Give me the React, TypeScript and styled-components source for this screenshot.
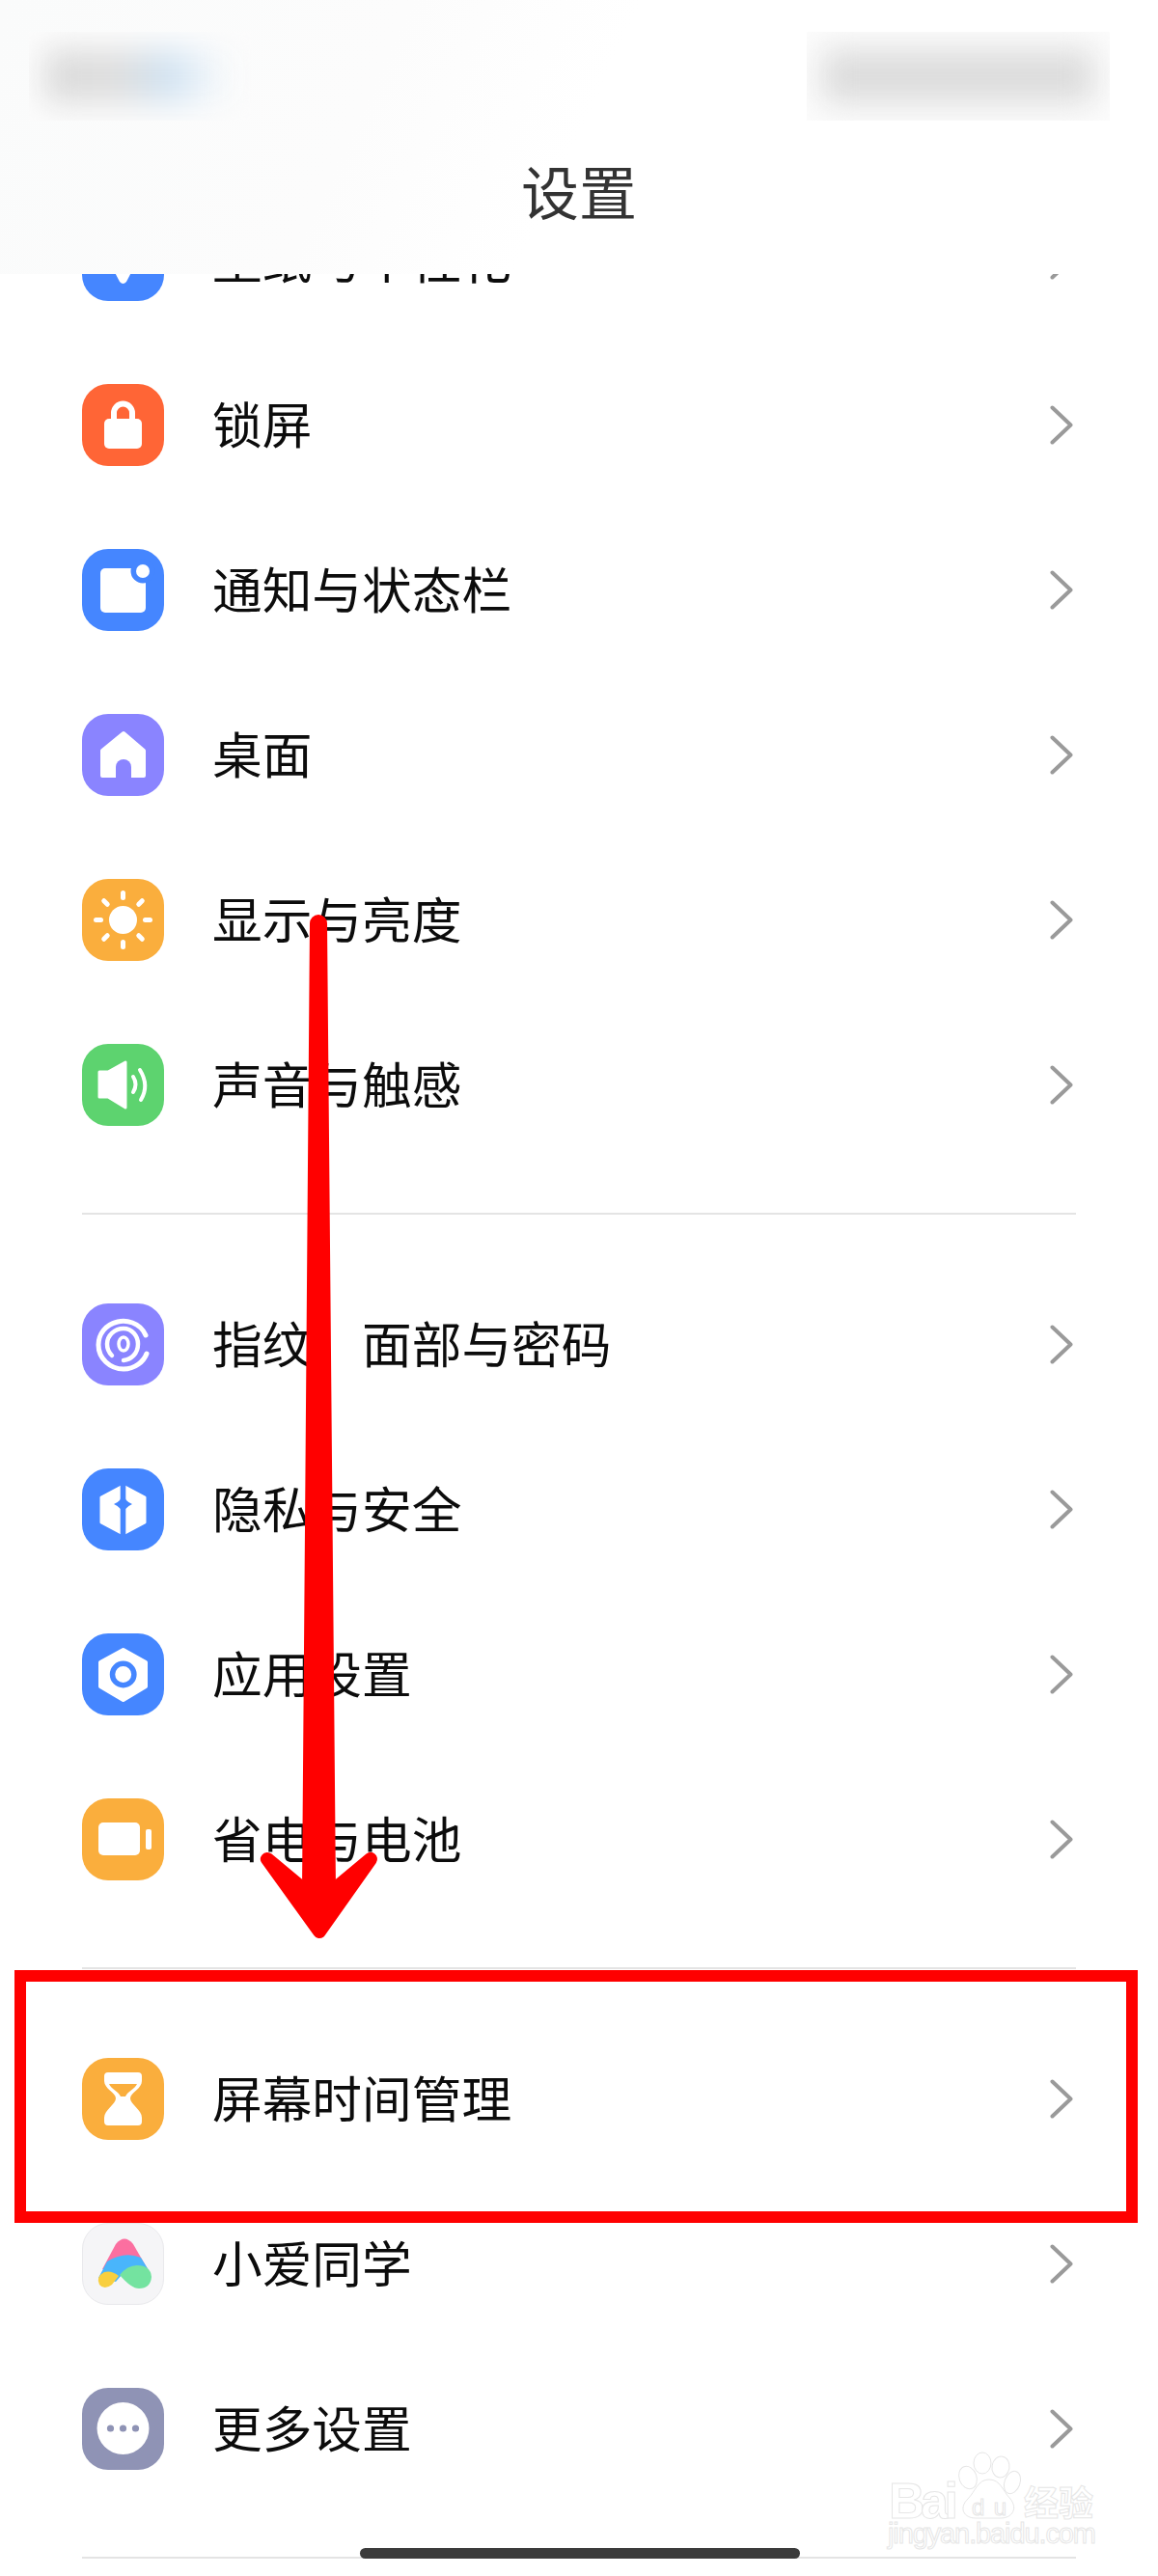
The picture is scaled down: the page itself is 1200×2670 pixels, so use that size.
import type { ReactNode } from "react";
import styled, { createGlobalStyle } from "styled-components";

const GlobalStyle = createGlobalStyle`
  html, body {
    margin: 0;
    padding: 0;
    background: #fff;
  }
  * {
    box-sizing: border-box;
  }
`;

const Page = styled.div`
  position: relative;
  width: 1200px;
  height: 2670px;
  overflow: hidden;
  background: #fff;
  font-family: "Noto Sans CJK SC", "Noto Sans", sans-serif;
`;

const Header = styled.header`
  position: absolute;
  top: 0;
  left: 0;
  right: 0;
  height: 284px;
  padding: 33px 50px 0 30px;
  background: linear-gradient(115deg, #fafbfb 0%, #fcfcfc 32%, #fff 50%);
  z-index: 2;
`;

const StatusBar = styled.div`
  display: flex;
  justify-content: space-between;
  height: 92px;
`;

const StatusPatch = styled.div<{ $width: number }>`
  width: ${({ $width }) => $width}px;
  height: 100%;
  padding: 18px 16px;
  overflow: hidden;
  background: #fcfcfc;
`;

const StatusBlur = styled.div<{ $fill: string }>`
  width: 100%;
  height: 100%;
  background: ${({ $fill }) => $fill};
  filter: blur(16px);
`;

const Title = styled.h1`
  margin: 32px 0 0 20px;
  font-size: 60px;
  font-weight: 400;
  line-height: 80px;
  text-align: center;
  color: #333;
`;

const List = styled.main`
  padding: 184px 85px 0;
`;

const Group = styled.section`
  display: flex;
  flex-direction: column;
`;

const Row = styled.div`
  display: flex;
  align-items: center;
  height: 171px;
  padding-right: 3px;
`;

const Tile = styled.div<{ $bg: string; $outlined?: boolean }>`
  flex: none;
  width: 85px;
  height: 85px;
  border-radius: 27px;
  overflow: hidden;
  background: ${({ $bg }) => $bg};
  border: ${({ $outlined }) => ($outlined ? "1px solid #e9e9ec" : "none")};
`;

const TileSvg = styled.svg`
  display: block;
  width: 85px;
  height: 85px;
`;

const RowLabel = styled.span`
  flex: 1;
  margin: -5px 0 0 50px;
  font-size: 51.7px;
  line-height: 70px;
  color: #0c0c0c;
`;

const Chevron = styled.svg`
  flex: none;
  width: 24px;
  height: 41px;
`;

const Divider = styled.hr`
  height: 2px;
  margin: 47px 0 49px;
  border: 0;
  background: #e4e4e4;
`;

const RedBox = styled.div`
  position: absolute;
  left: 15px;
  top: 2042px;
  width: 1164px;
  height: 262px;
  border: 12px solid #ff0000;
  z-index: 3;
`;

const ArrowSvg = styled.svg`
  position: absolute;
  left: 260px;
  top: 940px;
  width: 140px;
  height: 1080px;
  z-index: 3;
`;

const HomeBar = styled.div`
  position: absolute;
  left: 373px;
  top: 2641px;
  width: 456px;
  height: 11px;
  border-radius: 6px;
  background: #3b3b3b;
  z-index: 3;
`;

const Watermark = styled.svg`
  position: absolute;
  left: 915px;
  top: 2540px;
  width: 225px;
  height: 110px;
  z-index: 3;
`;

const W = "#fff";

const icons: Record<string, { bg: string; outlined?: boolean; art: ReactNode }> = {
  wallpaper: {
    bg: "#4586ff",
    art: <path d="M26 40 H59 L46 65 Q42.5 69 39 65 Z" fill={W} />,
  },
  lock: {
    bg: "#ff6536",
    art: (
      <>
        <path d="M33 38 V30 a9.5 9.5 0 0 1 19 0 V38" fill="none" stroke={W} strokeWidth="6" />
        <rect x="23" y="36" width="39" height="31" rx="5" fill={W} />
      </>
    ),
  },
  notify: {
    bg: "#4586ff",
    art: (
      <>
        <rect x="19" y="20" width="47" height="46" rx="5" fill={W} />
        <circle cx="63" cy="23" r="12.5" fill="#4586ff" />
        <circle cx="63" cy="23" r="7" fill={W} />
      </>
    ),
  },
  home: {
    bg: "#8a84ff",
    art: (
      <>
        <path d="M43 20 L64 38 V64 H21 V38 Z" fill={W} stroke={W} strokeWidth="4" strokeLinejoin="round" />
        <path d="M35 70 V55 a8 8 0 0 1 16 0 V70 Z" fill="#8a84ff" />
      </>
    ),
  },
  sun: {
    bg: "#faae3d",
    art: (
      <>
        <circle cx="42.5" cy="42.5" r="14.5" fill={W} />
        {[0, 45, 90, 135, 180, 225, 270, 315].map(angle => (
          <rect
            key={angle}
            x="40"
            y="12"
            width="5"
            height="10"
            rx="2.5"
            fill={W}
            transform={`rotate(${angle} 42.5 42.5)`}
          />
        ))}
      </>
    ),
  },
  sound: {
    bg: "#5dd36f",
    art: (
      <>
        <path
          d="M18 29 H27 L45 19 V66 L27 55 H18 Z"
          fill={W}
          stroke={W}
          strokeWidth="3"
          strokeLinejoin="round"
        />
        <path d="M53 34 Q58 42 53 50" fill="none" stroke={W} strokeWidth="4" strokeLinecap="round" />
        <path d="M60 27 Q70 43 61 58" fill="none" stroke={W} strokeWidth="4" strokeLinecap="round" />
      </>
    ),
  },
  finger: {
    bg: "#8a84ff",
    art: (
      <g fill="none" stroke={W} strokeLinecap="round">
        <path d="M66 33 C60 19 45 17 37 19 C24 22 17 32 17 43 C17 57 29 68 43 68 C55 68 64 60 67 52" strokeWidth="5" />
        <path d="M31 54 C27 50 26 46 26 42 C26 33 34 26 43 26 C52 26 58 34 58 42 C58 52 51 58 43 59" strokeWidth="4.5" />
        <ellipse cx="43" cy="42" rx="5" ry="7" strokeWidth="3.5" />
      </g>
    ),
  },
  privacy: {
    bg: "#4586ff",
    art: (
      <>
        <path
          d="M42.5 18 L65 30 V56 L42.5 68 L20 56 V30 Z"
          fill={W}
          stroke={W}
          strokeWidth="3"
          strokeLinejoin="round"
        />
        <rect x="39.7" y="12" width="5.6" height="60" fill="#4586ff" />
        <path d="M42.5 25 Q44 34 52 37 Q44 40 42.5 49 Q41 40 33 37 Q41 34 42.5 25 Z" fill="#4586ff" />
      </>
    ),
  },
  apps: {
    bg: "#4586ff",
    art: (
      <>
        <path
          d="M42.7 17 L66 30 V55 L42.7 69 L19 55 V30 Z"
          fill={W}
          stroke={W}
          strokeWidth="4"
          strokeLinejoin="round"
        />
        <circle cx="42.7" cy="42.5" r="11.2" fill="none" stroke="#4586ff" strokeWidth="5.5" />
      </>
    ),
  },
  battery: {
    bg: "#faae3d",
    art: (
      <>
        <rect x="17" y="25" width="43" height="34" rx="5" fill={W} />
        <rect x="66" y="32" width="6" height="21" rx="2" fill={W} />
      </>
    ),
  },
  hourglass: {
    bg: "#faae3d",
    art: (
      <>
        <path
          d="M27 15 H58 a4 4 0 0 1 4 4 V24 C62 32 50 36 50 42 C50 48 62 54 62 62 V66 a4 4 0 0 1 -4 4 H27 a4 4 0 0 1 -4 -4 V62 C23 54 35 48 35 42 C35 36 23 32 23 24 V19 a4 4 0 0 1 4 -4 Z"
          fill={W}
        />
        <path d="M28 27 H57 C55 32 47 35 45 40 H40 C38 35 30 32 28 27 Z" fill="#faae3d" />
      </>
    ),
  },
  xiaoai: {
    bg: "#f5f5f7",
    outlined: true,
    art: (
      <>
        <path d="M34 21 Q43 10 52 21 L67 47 H20 Z" fill="#fb6fa0" />
        <path d="M25 39 Q43 28 60 35 L68 48 Q50 40 40 53 L34 60 L16 56 Z" fill="#49b5fb" />
        <path d="M22 50 Q30 48 37 54 L30 63 Q22 69 17 63 Q13 55 22 50 Z" fill="#f8cf3f" />
        <path d="M38 53 Q46 43 56 43 Q70 43 71 55 Q70 67 58 67 Q50 67 38 53 Z" fill="#74e3a0" />
      </>
    ),
  },
  more: {
    bg: "#8f93b5",
    art: (
      <>
        <circle cx="42.5" cy="42" r="27" fill={W} />
        <circle cx="29.5" cy="42" r="3.6" fill="#8f93b5" />
        <circle cx="42.5" cy="42" r="3.6" fill="#8f93b5" />
        <circle cx="55.5" cy="42" r="3.6" fill="#8f93b5" />
      </>
    ),
  },
};

const groups = [
  [
    { icon: "wallpaper", label: "壁纸与个性化" },
    { icon: "lock", label: "锁屏" },
    { icon: "notify", label: "通知与状态栏" },
    { icon: "home", label: "桌面" },
    { icon: "sun", label: "显示与亮度" },
    { icon: "sound", label: "声音与触感" },
  ],
  [
    { icon: "finger", label: "指纹、面部与密码" },
    { icon: "privacy", label: "隐私与安全" },
    { icon: "apps", label: "应用设置" },
    { icon: "battery", label: "省电与电池" },
  ],
  [
    { icon: "hourglass", label: "屏幕时间管理" },
    { icon: "xiaoai", label: "小爱同学" },
    { icon: "more", label: "更多设置" },
  ],
];

const SettingRow = ({ icon, label }: { icon: string; label: string }) => (
  <Row>
    <Tile $bg={icons[icon].bg} $outlined={icons[icon].outlined}>
      <TileSvg viewBox="0 0 85 85">{icons[icon].art}</TileSvg>
    </Tile>
    <RowLabel>{label}</RowLabel>
    <Chevron viewBox="0 0 24 41">
      <path
        d="M2.5 2.5 L21.5 20.5 L2.5 38.5"
        fill="none"
        stroke="#9a9a9a"
        strokeWidth="4"
        strokeLinecap="round"
        strokeLinejoin="round"
      />
    </Chevron>
  </Row>
);

const App = () => (
  <Page>
    <GlobalStyle />
    <Header>
      <StatusBar>
        <StatusPatch $width={230}>
          <StatusBlur $fill="linear-gradient(90deg, #dadada 0%, #dedede 40%, #cfe2f2 65%, #eef4f9 85%, #fbfbfb 100%)" />
        </StatusPatch>
        <StatusPatch $width={314}>
          <StatusBlur $fill="#dcdcdc" />
        </StatusPatch>
      </StatusBar>
      <Title>设置</Title>
    </Header>

    <List>
      {groups.map((rows, index) => (
        <Group key={index}>
          {rows.map(row => (
            <SettingRow key={row.icon} icon={row.icon} label={row.label} />
          ))}
          <Divider />
        </Group>
      ))}
    </List>

    <ArrowSvg viewBox="260 940 140 1080">
      <path d="M321 957 a9 9 0 0 1 18 0 L348 1960 H313 Z" fill="#ff0000" />
      <path
        d="M277 1927 L331 2002 L384 1927 L348 1957 H313 Z"
        fill="#ff0000"
        stroke="#ff0000"
        strokeWidth="14"
        strokeLinejoin="round"
      />
    </ArrowSvg>

    <RedBox />
    <HomeBar />

    <Watermark viewBox="0 0 225 110">
      <g fill="#fff" stroke="#e6e6e6" strokeWidth="1">
        <ellipse cx="88" cy="28" rx="9" ry="12" transform="rotate(-20 88 28)" />
        <ellipse cx="103" cy="13" rx="9" ry="11" />
        <ellipse cx="122" cy="17" rx="9" ry="11" transform="rotate(10 122 17)" />
        <ellipse cx="134" cy="33" rx="8" ry="12" transform="rotate(20 134 33)" />
        <path d="M110 30 C122 30 124 42 132 50 C140 60 134 70 122 70 H96 C84 70 78 60 88 50 C96 42 98 30 110 30 Z" />
        <text x="6" y="70" fontFamily="Liberation Sans, sans-serif" fontSize="52" fontWeight="700" textLength="72">
          Bai
        </text>
        <text x="92" y="67" fontFamily="Liberation Sans, sans-serif" fontSize="24" textLength="36">
          du
        </text>
        <text x="146" y="68" fontFamily="Noto Sans CJK SC, sans-serif" fontSize="36" fontWeight="700">
          经验
        </text>
        <text x="5" y="96" fontFamily="Liberation Sans, sans-serif" fontSize="29" textLength="216">
          jingyan.baidu.com
        </text>
      </g>
    </Watermark>
  </Page>
);

export default App;
